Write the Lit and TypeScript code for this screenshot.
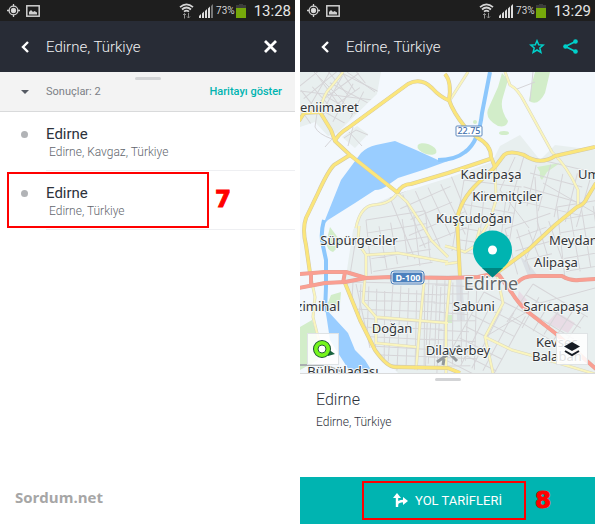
import { LitElement, html, svg, css } from "lit";
import { customElement, property } from "lit/decorators.js";

interface Place { name: string; detail: string; marked: boolean }
interface Label { x: number; y: number; text: string; anchor?: string }

const places: Place[] = [
  { name: "Edirne", detail: "Edirne, Kavgaz, Türkiye", marked: false },
  { name: "Edirne", detail: "Edirne, Türkiye", marked: true },
];

@customElement("status-bar")
class StatusBar extends LitElement {
  @property() time = "";
  static styles = css`
    :host { display: flex; align-items: center; height: 21px; padding: 0 4px 0 7px; background: #1e1e1e; color: #d2d2d2; font-family: Roboto, sans-serif; }
    svg { display: block; flex: none; }
    .picture { margin-left: 6px; }
    .wifi { margin-left: auto; }
    .signal { margin-left: 5px; }
    .level { font-size: 10px; margin: 0 1px 0 3px; }
    .time { font-size: 15px; color: #e6e6e6; margin-left: 8px; }
  `;
  render() {
    return html`
      <svg width="13" height="13" viewBox="0 0 13 13" fill="none" stroke="#d0d0d0" stroke-width="1.3">
        <circle cx="6.5" cy="6.5" r="4.4"/><circle cx="6.5" cy="6.5" r="2" fill="#e4e4e4"/>
        <path d="M6.500 0v2.500M6.500 10.500V13M0 6.500h2.500M10.500 6.500H13"/>
      </svg>
      <svg class="picture" width="14" height="12" viewBox="0 0 14 12">
        <rect x=".8" y=".8" width="12.400" height="10.400" fill="none" stroke="#d0d0d0" stroke-width="1.500"/>
        <path d="M3 9.500V7l2-2 2 2 1.500-1L11 7.500v2z" fill="#d0d0d0"/>
      </svg>
      <svg class="wifi" width="15" height="16" viewBox="0 0 15 16" fill="none" stroke="#d6d6d6" stroke-width="1.700">
        <path d="M1 4.200Q7.500-1.500 14 4.200M3 6.500Q7.500 2.500 12 6.500M5 8.700Q7.500 6.500 10 8.700"/>
        <path d="M5.500 15.500v-5M4 12l1.500-1.500L7 12M9.500 10v5M8 13.500 9.500 15l1.500-1.500" stroke="#8e8e8e" stroke-width="1"/>
      </svg>
      <svg class="signal" width="14" height="14" viewBox="0 0 14 14">
        <path d="M0 14v-2l2-2v4zM3 14V9.500l2-2V14zM6 14V7l2-2v9zM9 14V4.500l2-2V14z" fill="#ddd"/>
        <path d="M12 14V2l2-2v14z" fill=${this.time === "13:28" ? "#777" : "#ddd"}/>
      </svg>
      <span class="level">73%</span>
      <svg width="10" height="14" viewBox="0 0 10 14">
        <path d="M3 0h4v1h3v3H0V1h3z" fill="#3c3c3c"/><path d="M0 4h10v10H0z" fill="#76a80b"/>
      </svg>
      <span class="time">${this.time}</span>`;
  }
}

/** Parallel streets in two directions that fill a rotated rectangle. */
function streets(x: number, y: number, w: number, h: number, step: number, angle: number) {
  let d = "";
  for (let i = 0; i <= w; i += step) {
    const a = (i * 7) % 5;
    d += `M${i} ${a * 2}L${i + a - 2} ${h - ((i * 3) % 11)}`;
  }
  for (let j = 0; j <= h; j += step + 1) {
    const a = (j * 5) % 13;
    d += `M${a} ${j}L${w - a} ${j + (a % 4) - 1}`;
  }
  return svg`<path d=${d} transform="translate(${x} ${y}) rotate(${angle})"/>`;
}

const mainRoads = [
  "M299 121L304 113L320 112L331 130L335 141L350 155L398 193",
  "M335 141Q338 134 348 128L408 84Q421 77 432 88Q440 97 450 101",
  "M350 155L334 165Q328 171 318 193L306 218Q302 229 306 245L310 273",
  "M397 193Q402 184 411 184L448 173L490 159",
  "M445 74Q452 82 449 100Q453 112 465 127L478 138Q491 145 491 157L495 167",
  "M457 220Q460 200 478 183L495 167L504 155Q510 150 524 155Q540 166 555 156L595 147",
  "M457 217L460 277",
  "M596 183L587 198Q584 205 577 207L555 225L528 250L498 272",
  "M345 283L360 320L375 350Q387 367 395 367L448 368L460 373",
];
const sideRoads = [
  "M343 72L331 87Q323 94 320 112",
  "M468 72L450 100",
  "M505 72L510 85Q518 89 525 103L552 152Q567 166 578 190V206",
  "M356 228Q360 207 373 205Q391 204 397 193L407 202L423 226L431 240L448 257",
  "M495 167L496 200L490 220L475 246",
  "M310 273L315 297L313 317L320 345",
  "M366 278V255L358 243L359 226",
  "M366 255L398 253L448 262",
  "M365 278L363 302L376 317L448 323",
  "M376 317V343L416 347", "M424 283L420 323L416 370",
  "M450 280L446 323V373",
  "M460 262L445 264M445 246L453 248L465 252L475 246L480 228",
  "M497 275L503 303L485 337L493 373",
  "M485 337L512 350L555 362L595 374",
];
const highways = [
  "M299 274L325 272H346L366 278L391 277L448 278L478 277L492 274L499 275L512 293Q518 303 528 312L555 333L596 369",
  "M299 288L325 283L345 282L366 278",
  "M311 273V285M345 272L343 283",
  "M517 283Q523 276 534 276H562Q570 281 579 280L596 279",
];
const labels: Label[] = [
  { x: 300, y: 112, text: "eniimaret" },
  { x: 491, y: 179, text: "Kadirpaşa", anchor: "middle" },
  { x: 507, y: 201, text: "Kiremitçiler", anchor: "middle" },
  { x: 578, y: 179, text: "Um" },
  { x: 474, y: 223, text: "Kuşçudoğan", anchor: "middle" },
  { x: 359, y: 245, text: "Süpürgeciler", anchor: "middle" },
  { x: 549, y: 245, text: "Meydan" },
  { x: 556, y: 267, text: "Alipaşa", anchor: "middle" },
  { x: 340, y: 311, text: "zimihal", anchor: "end" },
  { x: 474, y: 311, text: "Sabuni", anchor: "middle" },
  { x: 556, y: 311, text: "Sarıcapaşa", anchor: "middle" },
  { x: 392, y: 333, text: "Doğan", anchor: "middle" },
  { x: 458, y: 355, text: "Dilaverbey", anchor: "middle" },
  { x: 536, y: 347, text: "Kevseç" },
  { x: 532, y: 361, text: "Balaban" },
  { x: 343, y: 376, text: "Bülbüladası", anchor: "middle" },
];

@customElement("city-map")
class CityMap extends LitElement {
  static styles = css`
    :host { display: block; position: relative; overflow: hidden; min-height: 200px; background: #f3f8fd; }
    .map { position: absolute; inset: 0; width: 100%; height: 100%; }
    .open { fill: #f3f8fd; }
    .town { fill: #e8efef; }
    .park { fill: #d2edc9; }
    .water { fill: #99cdff; }
    .river { fill: none; stroke: #8cc7fc; stroke-width: 4; }
    .street { fill: none; stroke: #d6d5d8; stroke-width: 1; }
    .case { fill: none; stroke: #d3c8a4; stroke-width: 4; stroke-linejoin: round; }
    .main { fill: none; stroke: #fbe67b; stroke-width: 3; stroke-linejoin: round; }
    .sidecase { fill: none; stroke: #d9d7c2; stroke-width: 3; }
    .side { fill: none; stroke: #faf5bd; stroke-width: 2; }
    .redcase { fill: none; stroke: #e3a197; stroke-width: 4; stroke-linejoin: round; }
    .red { fill: none; stroke: #fa9f92; stroke-width: 3; stroke-linejoin: round; }
    .label { font: 13px "Noto Sans", sans-serif; fill: #323538; stroke: #f5f8f8; stroke-width: 2; paint-order: stroke; }
    .city { font: 18px "Noto Sans", sans-serif; fill: #64686b; stroke: #f5f8f8; stroke-width: 2; paint-order: stroke; }
    .shield { font: 500 9px "Noto Sans", sans-serif; fill: #3f70ad; text-anchor: middle; }
    .light { font-weight: 700; fill: #fff; }
    .middle { text-anchor: middle; }
    .end { text-anchor: end; }
    button { position: absolute; bottom: 8px; width: 32px; height: 32px; padding: 0; border: 1px solid #dfe3e5; background: rgba(255, 255, 255, 0.85); display: grid; place-items: center; }
    .compass { left: 7px; }
    .layers { right: 7px; }
  `;
  render() {
    return html`
      <svg class="map" viewBox="300 72 295 301" preserveAspectRatio="xMidYMid slice">
        <defs>
          <clipPath id="core"><path d="M353 230L365 208L400 193L448 178L492 162L520 136L540 160L595 150V373H398L375 350L345 283z"/></clipPath>
          <clipPath id="west"><path d="M300 72H381L377 94L337 130L328 136L315 122L300 127z"/></clipPath>
        </defs>
        <rect class="open" x="300" y="72" width="295" height="301"/>
        <path class="town" d="M300 72H381L377 94L337 133L328 136L315 122L300 127zM342 137L357 126L368 134L355 148z"/>
        <path class="town" d="M353 230L365 208L400 193L448 178L492 162L500 146L520 135L540 160L555 145L595 150V373H398L375 350L345 283z"/>
        <path class="park" d="M502 73L508 80L503 97Q499 108 508 121Q507 128 498 126Q483 118 489 107L498 87zM535 72H550L545 93Q538 107 529 101L532 83zM537 167L560 163L547 172L542 180Q539 178 540 172zM330 227L342 243L333 252Q325 249 327 239zM331 295L341 292L340 304Q333 318 326 308zM300 327L312 320L318 338V360L300 370zM448 315H452V323H448z"/>
        <ellipse class="park" cx="427" cy="149" rx="10" ry="5" transform="rotate(20 427 149)"/>
        <ellipse class="park" cx="504" cy="133" rx="5" ry="2"/><circle class="park" cx="475" cy="122" r="2"/>
        <path d="M557 312L575 323L568 333L547 323zM519 291L527 300L525 307L517 300z" fill="#e8dce5"/>
        <path d="M520 256L527 262L538 276H528zM456 278H462L465 320H457z" fill="#dbe0e5"/>
        <path class="water" d="M323 225L341 180L361 153Q367 147 376 145L395 141L416 150L438 160L448 158V161L426 169L398 178L388 185Q382 190 375 190L355 203L328 220zM325 308L348 333L355 350L365 360L373 373H351L338 353L330 340L327 320z"/>
        <path class="river" d="M438 160Q455 160 465 152Q479 142 482 113L490 72M324 220Q320 235 323 246L326 260V287L325 312"/>
        <g class="street" clip-path="url(#west)">
          ${streets(290, 94, 70, 38, 11, -38)}${streets(332, 68, 54, 48, 13, 28)}
          <path d="M300 91L381 101M314 72L340 98L352 114M347 72L375 92"/>
        </g>
        <g class="street" clip-path="url(#core)">
          ${streets(366, 220, 60, 54, 12, -8)}${streets(390, 198, 65, 66, 13, -24)}
          ${streets(353, 282, 95, 88, 8, 2)}${streets(429, 276, 51, 94, 8, 1)}
          ${streets(464, 180, 58, 72, 11, 8)}${streets(524, 156, 74, 57, 14, 14)}
          ${streets(505, 229, 48, 47, 11, -18)}${streets(557, 207, 39, 70, 12, -8)}
          ${streets(484, 292, 48, 79, 12, 28)}${streets(533, 284, 64, 46, 12, 32)}
          <path d="M535 177L538 228L525 262M515 157L500 190L529 228M543 183L595 213M540 303L595 288M485 337L525 313"/>
        </g>
        <path class="street" d="M349 132L362 146M344 138L356 130L368 135M353 127L348 146M317 113L315 127Q318 134 332 139L325 147M533 72L530 101M517 89L535 82M356 238L350 275M356 284L370 348"/>
        <path d="M300 365H325L345 373" fill="none" stroke="#a9afb0" stroke-width="2"/>
        ${sideRoads.map((d) => svg`<path class="sidecase" d=${d}/>`)}
        ${sideRoads.map((d) => svg`<path class="side" d=${d}/>`)}
        ${mainRoads.map((d) => svg`<path class="case" d=${d}/>`)}
        ${mainRoads.map((d) => svg`<path class="main" d=${d}/>`)}
        ${highways.map((d) => svg`<path class="redcase" d=${d}/>`)}
        ${highways.map((d) => svg`<path class="red" d=${d}/>`)}
        <rect x="456" y="126" width="26" height="10" rx="1" fill="#fff" stroke="#5f89bd"/>
        <text class="shield" x="469" y="134">22.75</text>
        <rect x="392" y="272" width="31" height="11" rx="2" fill="#4b80bd" stroke="#fff"/>
        <rect x="391" y="271" width="33" height="13" rx="3" fill="none" stroke="#4b80bd"/>
        <text class="shield light" x="408" y="281">D-100</text>
        <path d="M437 362L460 346M444 359L443 365M450 354L457 361M455 347L460 355" stroke="#94999b" stroke-width="3"/>
        ${labels.map((l) => svg`<text class="label ${l.anchor ?? ""}" x=${l.x} y=${l.y}>${l.text}</text>`)}
        <text class="city middle" x="491" y="290">Edirne</text>
        <path d="M492.500 277L480 266Q473 259 473 250a19.500 19.500 0 0 1 39 0Q512 259 505 266z" fill="#00b4b1"/>
        <path d="M482 268H503L492.500 277.500z" fill="#008581"/>
        <circle cx="492.500" cy="250" r="4.500" fill="#fff"/>
      </svg>
      <button class="compass" aria-label="Konumum">
        <svg width="24" height="22" viewBox="0 0 24 22">
          <path d="M17 11L24 16L17 18z" fill="#19633f"/><circle cx="11" cy="11" r="6" fill="none" stroke="#17552f" stroke-width="6"/>
          <circle cx="11" cy="11" r="6" fill="#fff" stroke="#75f51b" stroke-width="4"/><circle cx="11" cy="11" r="4" fill="#fff" stroke="#276033"/>
        </svg>
      </button>
      <button class="layers" aria-label="Katmanlar">
        <svg width="18" height="16" viewBox="0 0 18 16"><path d="M9 1L17 5.500L9 10L1 5.500z" fill="#171c24"/><path d="M2 10L9 14L16 10" fill="none" stroke="#171c24" stroke-width="2"/></svg>
      </button>`;
  }
}

const back = html`<button class="icon back" aria-label="Geri"><svg width="8" height="12" viewBox="0 0 8 12" fill="none" stroke="#fff" stroke-width="2.400"><path d="M7 1L2 6L7 11"/></svg></button>`;

@customElement("app-root")
class AppRoot extends LitElement {
  static styles = css`
    :host { display: grid; grid-template-columns: 1fr 1fr; gap: 5px; min-height: 100vh; background: #fff; font-family: Roboto, sans-serif; color: #2d323b; }
    * { box-sizing: border-box; }
    .phone { display: flex; flex-direction: column; min-width: 0; }
    button { font: inherit; color: inherit; border: 0; padding: 0; background: none; }
    header { display: flex; align-items: center; height: 51px; padding: 0 17px 0 21px; background: #282c36; color: #f0f1f3; }
    h1, h2, p, ul { margin: 0; padding: 0; font-weight: 400; }
    h1 { flex: 1; font-size: 15px; font-weight: 300; }
    .icon { display: grid; place-items: center; flex: none; }
    .back { width: 8px; margin-right: 17px; }
    .star { margin-right: 18px; }
    .bar { position: relative; display: flex; align-items: center; height: 40px; padding: 0 13px 0 21px; background: #f3f3f3; border-bottom: 1px solid #d9dadb; font-size: 11px; color: #7c8086; }
    .bar svg { margin-right: 17px; }
    .bar a { margin-left: auto; color: #00b4b1; font-weight: 500; text-decoration: none; }
    .grip { position: absolute; top: 5px; left: 50%; width: 26px; height: 3px; margin-left: -13px; border-radius: 2px; background: #d3d4d6; }
    ul { list-style: none; }
    li { position: relative; padding-left: 46px; }
    li button { display: block; width: 100%; height: 59px; padding-top: 2px; text-align: left; border-bottom: 1px solid #eeeff2; }
    .dot { position: absolute; left: 21px; top: 19px; width: 7px; height: 7px; border-radius: 50%; background: #b1b3b6; }
    .name, .detail { display: block; }
    .name { font-size: 15px; line-height: 20px; }
    .detail { padding-left: 3px; font-size: 12px; font-weight: 300; line-height: 16px; color: #62666d; }
    .mark { position: absolute; border: 2px solid #f00; pointer-events: none; }
    .number { position: absolute; font: bold 23px/24px "DejaVu Sans", sans-serif; color: #f00; -webkit-text-stroke: 1px #f00; }
    .row { left: 7px; top: 1px; width: 202px; height: 56px; }
    .seven { left: 215px; top: 16px; }
    .brand { margin-top: auto; padding: 0 15px 17px; font: bold 15px/20px "Open Sans", sans-serif; color: #a6a6a6; }
    city-map { flex: 1; }
    .sheet { position: relative; height: 104px; padding: 15px 16px; border-top: 1px solid #d9dadb; }
    .sheet .grip { top: 4px; }
    h2 { font-size: 16px; line-height: 22px; font-weight: 300; }
    .sheet p { margin-top: 3px; font-size: 12px; font-weight: 300; line-height: 16px; color: #2d323b; }
    .go { position: relative; display: flex; align-items: center; justify-content: center; gap: 7px; height: 47px; background: #00b4b1; color: #fff; font-size: 13px; }
    .action { inset: 4px 69px 4px 62px; }
    .eight { right: 44px; top: 11px; }
  `;
  render() {
    return html`
      <section class="phone">
        <status-bar time="13:28"></status-bar>
        <header>${back}<h1>Edirne, Türkiye</h1>
          <button class="icon" aria-label="Kapat"><svg width="15" height="13" viewBox="0 0 15 13" stroke="#fff" stroke-width="2.800"><path d="M2 1L13 12M13 1L2 12"/></svg></button>
        </header>
        <div class="bar">
          <span class="grip"></span>
          <svg width="8" height="4" viewBox="0 0 8 4"><path d="M0 0H8L4 4z" fill="#555a63"/></svg>
          <span>Sonuçlar: 2</span><a href="#map">Haritayı göster</a>
        </div>
        <ul>
          ${places.map((p) => html`<li><span class="dot"></span>
            <button><span class="name">${p.name}</span><span class="detail">${p.detail}</span></button>
            ${p.marked ? html`<span class="mark row"></span><span class="number seven">7</span>` : ""}
          </li>`)}
        </ul>
        <div class="brand">Sordum.net</div>
      </section>
      <section class="phone" id="map">
        <status-bar time="13:29"></status-bar>
        <header>${back}<h1>Edirne, Türkiye</h1>
          <button class="icon star" aria-label="Favorilere ekle"><svg width="16" height="15" viewBox="0 0 16 15" fill="none" stroke="#00d0ca" stroke-width="1.500"><path d="M8 1.800L9.700 5.800L14.200 6.100L10.800 9L11.900 13.400L8 11L4.100 13.400L5.200 9L1.800 6.100L6.300 5.800z"/></svg></button>
          <button class="icon" aria-label="Paylaş"><svg width="15" height="15" viewBox="0 0 15 15" fill="#00d0ca"><path d="M12.500 2.500L2.500 7.500L12.500 12.500" fill="none" stroke="#00d0ca" stroke-width="1.800"/><circle cx="12.500" cy="2.500" r="2.300"/><circle cx="2.500" cy="7.500" r="2.300"/><circle cx="12.500" cy="12.500" r="2.300"/></svg></button>
        </header>
        <city-map></city-map>
        <div class="sheet"><span class="grip"></span><h2>Edirne</h2><p>Edirne, Türkiye</p></div>
        <button class="go">
          <svg width="15" height="15" viewBox="0 0 15 15"><path d="M4 3V14M4 12Q4 8 11 8" fill="none" stroke="#fff" stroke-width="2.400"/><path d="M4 0L8 5H0zM10 4L15 8L10 12z" fill="#fff"/></svg>
          <span>YOL TARİFLERİ</span>
          <span class="mark action"></span><span class="number eight">8</span>
        </button>
      </section>`;
  }
}
